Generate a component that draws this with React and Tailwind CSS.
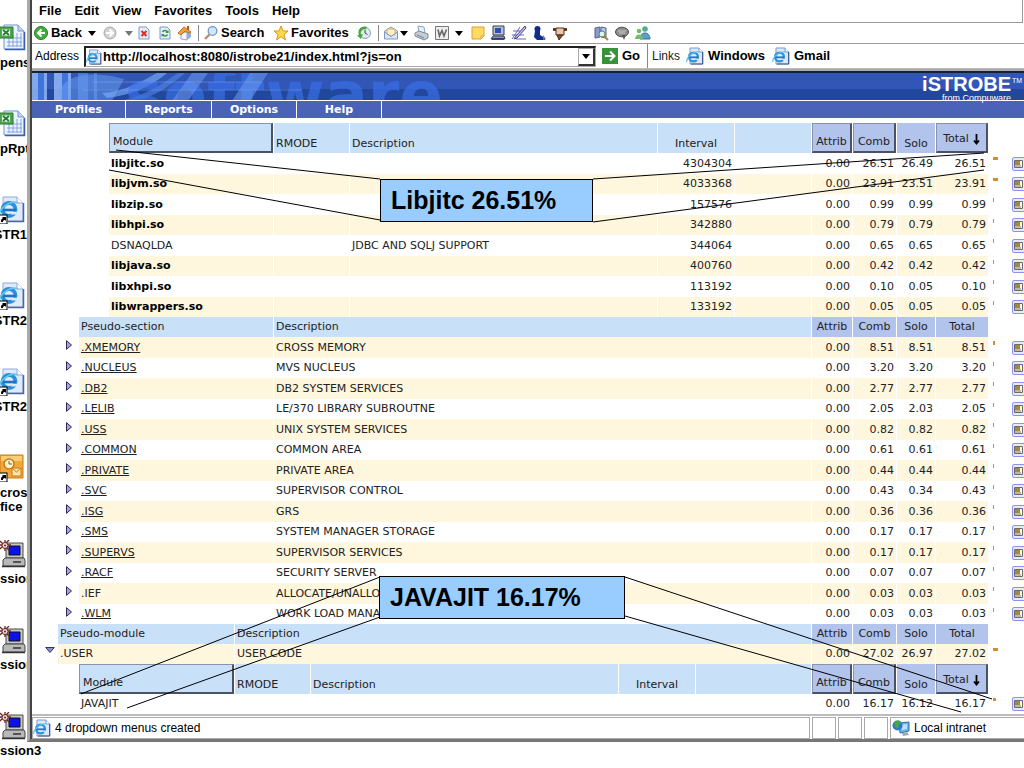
import React, { useState } from "react";

const MODULES = [
  { name: "libjitc.so", interval: "4304304", values: ["0.00", "26.51", "26.49", "26.51"] },
  { name: "libjvm.so", interval: "4033368", values: ["0.00", "23.91", "23.51", "23.91"] },
  { name: "libzip.so", interval: "157576", values: ["0.00", "0.99", "0.99", "0.99"] },
  { name: "libhpi.so", interval: "342880", values: ["0.00", "0.79", "0.79", "0.79"] },
  { name: "DSNAQLDA", plain: true, description: "JDBC AND SQLJ SUPPORT", interval: "344064", values: ["0.00", "0.65", "0.65", "0.65"] },
  { name: "libjava.so", interval: "400760", values: ["0.00", "0.42", "0.42", "0.42"] },
  { name: "libxhpi.so", interval: "113192", values: ["0.00", "0.10", "0.05", "0.10"] },
  { name: "libwrappers.so", interval: "133192", values: ["0.00", "0.05", "0.05", "0.05"] }
];

const SECTIONS = [
  { name: ".XMEMORY", description: "CROSS MEMORY", values: ["0.00", "8.51", "8.51", "8.51"] },
  { name: ".NUCLEUS", description: "MVS NUCLEUS", values: ["0.00", "3.20", "3.20", "3.20"] },
  { name: ".DB2", description: "DB2 SYSTEM SERVICES", values: ["0.00", "2.77", "2.77", "2.77"] },
  { name: ".LELIB", description: "LE/370 LIBRARY SUBROUTNE", values: ["0.00", "2.05", "2.03", "2.05"] },
  { name: ".USS", description: "UNIX SYSTEM SERVICES", values: ["0.00", "0.82", "0.82", "0.82"] },
  { name: ".COMMON", description: "COMMON AREA", values: ["0.00", "0.61", "0.61", "0.61"] },
  { name: ".PRIVATE", description: "PRIVATE AREA", values: ["0.00", "0.44", "0.44", "0.44"] },
  { name: ".SVC", description: "SUPERVISOR CONTROL", values: ["0.00", "0.43", "0.34", "0.43"] },
  { name: ".ISG", description: "GRS", values: ["0.00", "0.36", "0.36", "0.36"] },
  { name: ".SMS", description: "SYSTEM MANAGER STORAGE", values: ["0.00", "0.17", "0.17", "0.17"] },
  { name: ".SUPERVS", description: "SUPERVISOR SERVICES", values: ["0.00", "0.17", "0.17", "0.17"] },
  { name: ".RACF", description: "SECURITY SERVER", values: ["0.00", "0.07", "0.07", "0.07"] },
  { name: ".IEF", noLink: true, description: "ALLOCATE/UNALLOCATE", values: ["0.00", "0.03", "0.03", "0.03"] },
  { name: ".WLM", description: "WORK LOAD MANAGER", values: ["0.00", "0.03", "0.03", "0.03"] }
];

const USER_MODULE = { name: ".USER", description: "USER CODE", values: ["0.00", "27.02", "26.97", "27.02"] };
const USER_CHILDREN = [
  { name: "JAVAJIT", plain: true, interval: "", values: ["0.00", "16.17", "16.12", "16.17"] }
];

const DESKTOP = [
  { icon: "excel", lines: ["pens"] },
  { icon: "excel", lines: ["pRpt"] },
  { icon: "web", lines: ["STR1"], end: true },
  { icon: "web", lines: ["STR2"], end: true },
  { icon: "web", lines: ["STR2"], end: true },
  { icon: "outlook", lines: ["crosoft", "fice"] },
  { icon: "session", lines: ["ssion"] },
  { icon: "session", lines: ["ssion"] },
  { icon: "session", lines: ["ssion3"], last: true }
];

/* ---------- icons ---------- */

function PageE({ className }) {
  return (
    <svg viewBox="0 0 18 18" className={className} aria-hidden="true">
      <path d="M4 1h9l4 4v12H4z" fill="#dce8fb" stroke="#7d99cf" />
      <path d="M13 1v4h4" fill="#fff" stroke="#7d99cf" />
      <path d="M16.500 5v12H5" fill="none" stroke="#43598f" />
      <circle cx="7.500" cy="10" r="4.400" fill="none" stroke="#2f93d8" strokeWidth="2.400" />
      <path d="M3 10.300h9" stroke="#1f78c8" strokeWidth="1.800" />
      <path d="M9 11.700h5l-2.200 2z" fill="#dce8fb" />
      <path d="M1 15C-.5 11 8 3.500 13 5" fill="none" stroke="#5cc0ee" strokeWidth="1.200" />
    </svg>
  );
}

function ShortcutArrow() {
  return (
    <>
      <rect x="-2" y="19" width="9" height="9" fill="#fff" stroke="#000" />
      <path d="M1 26c0-2 0-3 2-4l-1-1h4v4l-1-1c-2 0-2 1-2 2z" fill="#000" />
    </>
  );
}

function DesktopIcon({ type }) {
  if (type === "excel") {
    return (
      <svg viewBox="0 0 27 28" className="h-7 w-[27px]" aria-hidden="true">
        <path d="M4 1h14l6 6v18H4z" fill="#eef4ff" stroke="#6f93d6" />
        <path d="M24.500 8v17.500H5" fill="none" stroke="#3e5fa8" strokeWidth="1.500" />
        <path d="M18 1v6h6" fill="#c5d6f5" stroke="#6f93d6" />
        <path d="M7 14h15M7 18h15M7 22h15M9 13v10M13 11v12M17 9v14M21 9v14" stroke="#86a5e0" />
        <path d="M-1 3h14v11H-1z" fill="#4ea64c" stroke="#2b7a30" />
        <path d="M2 5.500h8v6H2z" fill="#fff" />
        <path d="M3 6l6 5M9 6l-6 5" stroke="#1f7a2d" strokeWidth="1.800" />
      </svg>
    );
  }
  if (type === "web") {
    return (
      <svg viewBox="0 0 27 28" className="h-7 w-[27px]" aria-hidden="true">
        <path d="M3 1h14l6 6v18H3z" fill="#dfeafc" stroke="#8ea9d8" />
        <path d="M23.500 7v18.500H8" fill="none" stroke="#4c659b" strokeWidth="1.500" />
        <path d="M17 1v6h6" fill="#fff" stroke="#8ea9d8" />
        <circle cx="9" cy="13.500" r="6.500" fill="none" stroke="#2b8fdc" strokeWidth="3.800" />
        <path d="M3 14h13" stroke="#1d74c4" strokeWidth="2.600" />
        <path d="M12 15.800h6l-2 2.700h-5z" fill="#dfeafc" />
        <path d="M0 19C-2 14 10 3 18 7" fill="none" stroke="#65c5f0" strokeWidth="1.800" />
        <ShortcutArrow />
      </svg>
    );
  }
  if (type === "outlook") {
    return (
      <svg viewBox="0 0 27 28" className="h-7 w-[27px]" aria-hidden="true">
        <path d="M0 1h23v23H0z" fill="#f2a93a" stroke="#c97a17" />
        <path d="M1 2h21v5H1z" fill="#f9cd78" />
        <path d="M12 14h9v8h-9z" fill="#fde3ab" stroke="#c97a17" />
        <path d="M12 14l4.500 4 4.500-4" fill="none" stroke="#c97a17" />
        <circle cx="9" cy="10" r="5" fill="#fff3d6" stroke="#c97a17" strokeWidth="1.600" />
        <path d="M9 7v3h3" fill="none" stroke="#8b5512" />
        <ShortcutArrow />
      </svg>
    );
  }
  return (
    <svg viewBox="0 0 27 28" className="h-7 w-[27px]" aria-hidden="true">
      <path d="M6 3h17v15H6z" fill="#c8c8c8" stroke="#4a4a4a" />
      <path d="M9 6h11v9H9z" fill="#0a13e8" stroke="#111" />
      <path d="M5 18h19l1 2v6H3v-6z" fill="#b9b9b9" stroke="#444" />
      <path d="M13 22h8" stroke="#333" strokeWidth="1.500" />
      <path d="M2 26.500h23" stroke="#333" strokeWidth="1.500" />
      <path d="M0 1l10 10M9 0L0 9M5 0v11M0 5h11" stroke="#6b2420" strokeWidth="1.300" />
      <circle cx="5" cy="5.500" r="3" fill="#f1dada" stroke="#6b2420" />
      <circle cx="5" cy="5.500" r="1" fill="#6b2420" />
    </svg>
  );
}

function ToolIcon({ type }) {
  const shapes = {
    back: (
      <>
        <circle cx="8" cy="8" r="6.500" fill="#3fae3a" stroke="#237a25" />
        <path d="M8.500 4.500L5 8l3.500 3.500M5 8h7" fill="none" stroke="#fff" strokeWidth="2" />
      </>
    ),
    forward: (
      <>
        <circle cx="8" cy="8" r="6" fill="#d2d2d2" stroke="#aaa" />
        <path d="M7.500 4.500L11 8l-3.500 3.500M11 8H4" fill="none" stroke="#fff" strokeWidth="2" />
      </>
    ),
    stop: (
      <>
        <path d="M3 2h7l3 3v9H3z" fill="#e4edfb" stroke="#7d99cf" />
        <path d="M5.500 6l5 5M10.500 6l-5 5" stroke="#e02a22" strokeWidth="2" />
      </>
    ),
    refresh: (
      <>
        <path d="M3 2h7l3 3v9H3z" fill="#e4edfb" stroke="#7d99cf" />
        <path d="M5.500 7c1-2 4-2 5 0M10.500 9.500c-1 2-4 2-5 0" fill="none" stroke="#2e9a38" strokeWidth="1.600" />
        <path d="M11.500 5v3h-3zM4.500 12V9h3z" fill="#2e9a38" />
      </>
    ),
    home: (
      <>
        <path d="M4 8v6l6 1V7z" fill="#f5f5f8" stroke="#a0a9c0" />
        <path d="M10 7v8l4-3V8z" fill="#8fb0e6" />
        <path d="M1 8l6-6 7 5-2 1-4-2-4 4z" fill="#f1a33c" stroke="#c16d1b" />
        <path d="M10 1h2v4h-2z" fill="#c35428" />
      </>
    ),
    search: (
      <>
        <path d="M6.500 9.500L2 14" stroke="#c98a63" strokeWidth="2.400" />
        <circle cx="9.500" cy="6" r="4.300" fill="#cfe6fb" stroke="#7396c8" strokeWidth="1.300" />
      </>
    ),
    star: <path d="M8 1l2 5h5l-4 3.500L12.500 15 8 11.700 3.500 15 5 9.500 1 6h5z" fill="#ffd94a" stroke="#d6981d" />,
    history: (
      <>
        <circle cx="9" cy="8" r="5.500" fill="#dfeaf2" stroke="#8aa1b5" />
        <path d="M9 4.500V8l2.500 1.500" fill="none" stroke="#444" />
        <path d="M11 2C5 0 1 5 3 10l-2 .5L5 14l2-5-2 .5C4 6 7 3.500 10 4z" fill="#43a83f" />
      </>
    ),
    mail: (
      <>
        <path d="M1.500 6L8 2l6.500 4v8h-13z" fill="#d9e6fa" stroke="#7d99c4" />
        <path d="M4 4h8v5l-4 2.500L4 9z" fill="#fff0c2" stroke="#d5b05e" />
        <path d="M1.500 7L8 11.500 14.500 7" fill="none" stroke="#7d99c4" />
      </>
    ),
    print: (
      <>
        <path d="M4 1l6 1 1 6H5z" fill="#e6f2fc" stroke="#83a5c5" />
        <path d="M1 8l4-2 9 3v4l-4 2-9-4z" fill="#c5cbd2" stroke="#7f8b96" />
        <path d="M3 10l7 3" stroke="#5d87b3" />
      </>
    ),
    word: (
      <>
        <path d="M1.500 1.500h13v13h-13z" fill="#eee" stroke="#777" />
        <path d="M4 4.500L5.500 11 8 5.500 10 11l2.500-6.500" fill="none" stroke="#666" strokeWidth="1.600" />
      </>
    ),
    note: (
      <>
        <path d="M2 2h12v9l-3 3H2z" fill="#ffda64" stroke="#d9a52a" />
        <path d="M14 11h-3v3z" fill="#fff3c5" stroke="#d9a52a" />
      </>
    ),
    computer: (
      <>
        <path d="M3 1h11v9H3z" fill="#b9bfd0" stroke="#39405c" />
        <path d="M5 3h6v5H5z" fill="#2c50ae" />
        <path d="M3 11h11l1 3H1z" fill="#8f97ad" stroke="#39405c" />
        <path d="M2 14h12" stroke="#1f2b63" strokeWidth="1.500" />
      </>
    ),
    pencil: (
      <>
        <path d="M1 14L9 2M4 14L13 2M2 6h7M1 10h12M5 14h10" stroke="#6a66b2" />
        <path d="M14 1L5 11l-2 3 3-1L15 3z" fill="#c4c4ee" stroke="#44418e" />
      </>
    ),
    person: (
      <>
        <circle cx="6.500" cy="4" r="3" fill="#122c8c" />
        <path d="M4 6h5v4l5 3v2H6l-3-3z" fill="#122c8c" />
        <path d="M12 10l3 4-3 1z" fill="#6976a8" />
      </>
    ),
    hammer: (
      <>
        <path d="M1 3h14v3H1z" fill="#6a3a20" />
        <path d="M4 3h8v7H4z" fill="#e6c9ab" stroke="#52301c" />
        <path d="M5 10h6l-4 5z" fill="#8a4b25" stroke="#52301c" />
      </>
    ),
    book: (
      <>
        <path d="M2 3l5-1v10l-5 1z" fill="#8a9ad0" stroke="#535f95" />
        <path d="M8 2l5 1v10l-5-1z" fill="#bcc6ea" stroke="#535f95" />
        <circle cx="9" cy="9" r="3" fill="#e3f2e8" stroke="#4b8f68" />
        <path d="M11 11l4 4" stroke="#b87f40" strokeWidth="2" />
      </>
    ),
    chat: (
      <>
        <ellipse cx="8" cy="7" rx="6.500" ry="4.800" fill="#8e8e8e" stroke="#4d4d4d" />
        <path d="M8 10h4l-2 5z" fill="#555" />
        <path d="M4 6h8M5 8h6" stroke="#c9c9c9" />
      </>
    ),
    people: (
      <>
        <circle cx="10" cy="4" r="2.800" fill="#54a9a0" />
        <path d="M5 14c0-8 10-8 10 0z" fill="#5aa0cb" stroke="#337598" />
        <circle cx="4" cy="6" r="2.300" fill="#74bd65" />
        <path d="M0 14c0-6 8-6 8 0z" fill="#79b96e" />
      </>
    )
  };
  return (
    <svg viewBox="0 0 16 16" className="h-4 w-4 shrink-0" aria-hidden="true">
      {shapes[type]}
    </svg>
  );
}

function Caret({ className }) {
  return (
    <svg viewBox="0 0 8 5" className={`h-[5px] w-2 shrink-0 ${className}`} aria-hidden="true">
      <path d="M0 0h8L4 5z" fill="currentColor" />
    </svg>
  );
}

function Divider() {
  return <div className="h-4 w-px shrink-0 bg-[#888]" />;
}

/* ---------- browser chrome ---------- */

function ToolButton({ icon, title, wide }) {
  return (
    <button type="button" title={title} aria-label={title} className={`flex shrink-0 items-center justify-center ${wide ? "w-[21px]" : "w-5"}`}>
      <ToolIcon type={icon} />
    </button>
  );
}

function Toolbar() {
  return (
    <div className="flex h-[21px] items-center border-b border-[#999] text-[13px] font-bold">
      <button type="button" className="flex w-[70px] shrink-0 items-center gap-[2px] pl-px">
        <ToolIcon type="back" />
        Back
        <Caret className="ml-1 text-black" />
      </button>
      <button type="button" aria-label="Forward" className="flex w-[31px] shrink-0 items-center justify-between">
        <ToolIcon type="forward" />
        <Caret className="text-[#777]" />
      </button>
      <ToolButton icon="stop" title="Stop" wide />
      <ToolButton icon="refresh" title="Refresh" wide />
      <ToolButton icon="home" title="Home" />
      <div className="w-[3px]" />
      <Divider />
      <button type="button" className="ml-1 flex w-[70px] shrink-0 items-center gap-[2px]">
        <ToolIcon type="search" />
        Search
      </button>
      <button type="button" className="flex w-[81px] shrink-0 items-center gap-[2px]">
        <ToolIcon type="star" />
        Favorites
      </button>
      <ToolButton icon="history" title="History" />
      <div className="w-1" />
      <Divider />
      <button type="button" aria-label="Mail" className="ml-1 flex w-7 shrink-0 items-center">
        <ToolIcon type="mail" />
        <Caret className="ml-px" />
      </button>
      <ToolButton icon="print" title="Print" wide />
      <button type="button" aria-label="Edit" className="flex w-[31px] shrink-0 items-center justify-between pl-[2px]">
        <ToolIcon type="word" />
        <Caret className="text-black" />
      </button>
      <div className="w-1" />
      <ToolButton icon="note" title="Note" wide />
      <ToolButton icon="computer" title="Computer" />
      <ToolButton icon="pencil" title="Draw" wide />
      <ToolButton icon="person" title="Person" />
      <ToolButton icon="hammer" title="Tools" wide />
      <div className="w-5" />
      <ToolButton icon="book" title="Research" wide />
      <ToolButton icon="chat" title="Discuss" wide />
      <ToolButton icon="people" title="Messenger" wide />
    </div>
  );
}

function AddressBar() {
  const [url, setUrl] = useState("http://localhost:8080/istrobe21/index.html?js=on");
  return (
    <div className="flex h-[25px] items-center border-b border-[#bbb] text-[13px]">
      <label htmlFor="address" className="w-[52px] shrink-0 pl-[3px] text-[12px]">Address</label>
      <div className="flex h-[21px] min-w-0 flex-1 items-center border-2 border-r border-b border-[#222] border-r-[#aaa] border-b-[#aaa] bg-white">
        <PageE className="h-4 w-4 shrink-0" />
        <input
          id="address"
          type="text"
          value={url}
          onChange={e => setUrl(e.target.value)}
          className="h-4 min-w-0 flex-1 bg-transparent pl-px font-bold outline-none"
        />
        <button type="button" aria-label="Show addresses" className="flex h-[18px] w-[17px] items-center justify-center border border-r-2 border-b-2 border-[#aaa] border-r-[#333] border-b-[#333]">
          <Caret className="text-black" />
        </button>
      </div>
      <div className="flex w-[428px] shrink-0 items-center">
        <button type="button" className="flex w-[51px] items-center gap-1 pl-[6px] font-bold">
          <svg viewBox="0 0 16 16" className="h-4 w-4" aria-hidden="true">
            <path d="M0 0h16v16H0z" fill="#37933a" />
            <path d="M3 8h9M8 3.500L12.500 8 8 12.500" fill="none" stroke="#fff" strokeWidth="2" />
          </svg>
          Go
        </button>
        <div className="h-6 w-px bg-[#888]" />
        <span className="w-[38px] pl-1 text-[12px] text-[#222]">Links</span>
        <a href="#windows" className="flex w-[86px] items-center gap-1 font-bold">
          <PageE className="h-[18px] w-[18px]" />
          Windows
        </a>
        <a href="#gmail" className="flex items-center gap-1 font-bold">
          <PageE className="h-[18px] w-[18px]" />
          Gmail
        </a>
      </div>
    </div>
  );
}

function Banner() {
  return (
    <div className="relative z-10 flex h-[29px] justify-end border-t-2 border-[#16203f] bg-gradient-to-b from-[#3156b5] from-60% to-[#21489c] to-60%">
      <svg className="absolute inset-0 h-full w-[440px] overflow-hidden" aria-hidden="true">
        <path d="M0 0h6v28H0zM12 0h3v28h-3zM22 0h8v28h-8zM36 0h3v28h-3z" fill="#9fc4ff" opacity=".75" />
        <path d="M6 0h6v28H6zM30 0h6v28h-6z" fill="#3f74dd" />
        <path d="M46 0h10v28H46zM62 0h3v28h-3z" fill="#5f92f0" opacity=".6" />
        <path d="M30 28C20 8 50-6 92 6L80 28z" fill="#6ca0f4" opacity=".5" />
        <path d="M70 20C95 18 110 8 125 0h10c-14 12-34 22-60 25z" fill="#7fb0ff" opacity=".6" />
        <path d="M86 28c26-4 42-16 60-28h7c-16 14-32 24-50 28z" fill="#5285e6" opacity=".6" />
        <text x="93" y="44" fontSize="64" fontWeight="bold" fontFamily="DejaVu Sans, sans-serif" fill="#3a70ea" opacity=".65">software</text>
        <path d="M140 28L160 0h16l-20 28zM200 28L218 0h18l-18 28z" fill="#6b9af2" opacity=".55" />
        <path d="M60 9h170M50 17h220" stroke="#85aef7" opacity=".45" />
      </svg>
      <div className="relative flex flex-col items-end pr-[13px] font-['Liberation_Sans',sans-serif] text-white">
        <div className="text-[20px] leading-[22px] font-bold">iSTROBE</div>
        <div className="text-[9px] leading-[6px]">from Compuware</div>
        <span className="absolute top-1 right-[2px] text-[7px] leading-[8px]">TM</span>
      </div>
    </div>
  );
}

function SiteNav() {
  return (
    <nav className="flex h-[18px] border-t border-white bg-[#4a63b9] font-['DejaVu_Sans',sans-serif] text-[11px] leading-[17px] font-bold text-white">
      <a href="#profiles" className="w-[94px] border-r border-white text-center">Profiles</a>
      <a href="#reports" className="w-[86px] border-r border-white text-center">Reports</a>
      <a href="#options" className="w-[85px] border-r border-white text-center">Options</a>
      <a href="#help" className="w-[85px] border-r border-white text-center">Help</a>
    </nav>
  );
}

/* ---------- report tables ---------- */

function NumberCols() {
  return (
    <>
      <col className="w-[41px]" />
      <col className="w-[44px]" />
      <col className="w-[39px]" />
      <col className="w-[53px]" />
      <col className="w-[23px]" />
      <col className="w-3" />
    </>
  );
}

function RaisedHead({ children, tone, align = "justify-start" }) {
  return (
    <th className={`h-[30px] border-r border-white p-0 font-normal ${tone}`}>
      <button type="button" className={`flex h-[30px] w-full items-end border-t border-r-2 border-b-2 border-l border-[#8b93a8] border-r-[#4b5264] border-b-[#4b5264] ${align}`}>
        {children}
      </button>
    </th>
  );
}

function SortedNumberHeads() {
  return (
    <>
      <RaisedHead tone="bg-[#b2c3ec]" align="justify-center">Attrib</RaisedHead>
      <RaisedHead tone="bg-[#b2c3ec]" align="justify-center">Comb</RaisedHead>
      <th className="border-r border-white bg-[#b2c3ec] p-0 text-center align-bottom font-normal">Solo</th>
      <RaisedHead tone="bg-[#b2c3ec]" align="justify-center">
        <span className="mb-[3px] flex items-center gap-1">
          Total
          <svg viewBox="0 0 7 11" className="h-[11px] w-[7px]" aria-hidden="true">
            <path d="M3.500 0v9M1 6.500L3.500 9.500 6 6.500" fill="none" stroke="#000" strokeWidth="1.800" />
          </svg>
        </span>
      </RaisedHead>
      <td />
      <td />
    </>
  );
}

function PlainNumberHeads() {
  return (
    <>
      {["Attrib", "Comb", "Solo", "Total"].map(h => (
        <th key={h} className="border-r border-white bg-[#b2c3ec] p-0 text-center font-normal">{h}</th>
      ))}
      <td />
      <td />
    </>
  );
}

function Numbers({ values, tone, noReport }) {
  const total = Number(values[3]);
  return (
    <>
      {values.map((v, i) => (
        <td key={i} className={`border-r border-white p-0 pr-[2px] text-right ${tone}`}>{v}</td>
      ))}
      <td className="p-0 pl-1 align-top">
        <div
          className={`mt-1 bg-[#d58d2c] ${total > 10 ? "h-[3px]" : "h-1"}`}
          style={{ width: Math.max(1, Math.round(total / 5)) }}
        />
      </td>
      <td className="overflow-hidden p-0">
        {!noReport && (
          <button type="button" aria-label="Open report" className="block">
            <svg viewBox="0 0 16 14" className="h-[14px] w-4" aria-hidden="true">
              <rect x=".5" y=".5" width="15" height="13" rx="1.500" fill="#e7e9fd" stroke="#8d91ee" />
              <path d="M2.500 3.500h8v7h-8z" fill="#fffbe8" stroke="#6a6a6a" />
              <path d="M3 4h5v4H3z" fill="#a38844" />
              <path d="M3 9h6" stroke="#777" />
            </svg>
          </button>
        )}
      </td>
    </>
  );
}

function ModuleTable({ rows, className, cols }) {
  return (
    <div className={className}>
      <table className="w-full table-fixed border-separate border-spacing-0">
        <colgroup>
          <col className={cols[0]} />
          <col className={cols[1]} />
          <col />
          <col className="w-[77px]" />
          <col className={cols[2]} />
          <NumberCols />
        </colgroup>
        <thead>
          <tr className="h-[30px] text-left">
            <RaisedHead tone="bg-[#c9e0f9]"><span className="pl-[3px]">Module</span></RaisedHead>
            <th className="border-r border-white bg-[#c9e0f9] p-0 pl-[2px] align-bottom font-normal">RMODE</th>
            <th className="border-r border-white bg-[#c9e0f9] p-0 pl-[2px] align-bottom font-normal">Description</th>
            <th className="border-r border-white bg-[#c9e0f9] p-0 text-center align-bottom font-normal">Interval</th>
            <td className="border-r border-white bg-[#c9e0f9]" />
            <SortedNumberHeads />
          </tr>
        </thead>
        <tbody>
          {rows.map((r, i) => {
            const tone = i % 2 ? "bg-[#fff6de]" : "";
            return (
              <tr key={r.name} className={i % 2 || rows.length === 1 ? "h-5" : "h-[21px]"}>
                <td className={`border-r border-white p-0 pl-[2px] ${r.plain ? "" : "font-bold text-black"} ${tone}`}>{r.name}</td>
                <td className={`border-r border-white p-0 ${tone}`} />
                <td className={`border-r border-white p-0 pl-[2px] ${tone}`}>{r.description}</td>
                <td className={`border-r border-white p-0 pr-[2px] text-right ${tone}`}>{r.interval}</td>
                <td className={`border-r border-white p-0 ${tone}`} />
                <Numbers values={r.values} tone={tone} />
              </tr>
            );
          })}
        </tbody>
      </table>
    </div>
  );
}

function SectionTable({ title, rows, className, cols, open }) {
  return (
    <div className={className}>
      <table className="w-full table-fixed border-separate border-spacing-0">
        <colgroup>
          <col className="w-[18px]" />
          <col className={cols} />
          <col />
          <NumberCols />
        </colgroup>
        <thead>
          <tr className="h-5 text-left">
            <td />
            <th className="border-r border-white bg-[#c9e0f9] p-0 pl-[2px] font-normal">{title}</th>
            <th className="border-r border-white bg-[#c9e0f9] p-0 pl-[2px] font-normal">Description</th>
            <PlainNumberHeads />
          </tr>
        </thead>
        <tbody>
          {rows.map((r, i) => {
            const tone = i % 2 ? "" : "bg-[#fff6de]";
            return (
              <tr key={r.name} className={i % 2 || open ? "h-5" : "h-[21px]"}>
                <td className="p-0 pl-[5px] align-top">
                  <button type="button" aria-label={`Toggle ${r.name}`} className="mt-[3px] block">
                    {open ? (
                      <svg viewBox="0 0 10 6" className="h-[6px] w-[10px]" aria-hidden="true">
                        <path d="M.7.5h8.600L5 5.500z" fill="#8f8fc4" stroke="#333368" />
                      </svg>
                    ) : (
                      <svg viewBox="0 0 6 10" className="h-[10px] w-[6px]" aria-hidden="true">
                        <path d="M.5.7v8.600L5.500 5z" fill="#a6a6d2" stroke="#29295e" />
                      </svg>
                    )}
                  </button>
                </td>
                <td className={`border-r border-white p-0 pl-[2px] ${tone}`}>
                  {open || r.noLink ? r.name : <a href="#section" className="underline">{r.name}</a>}
                </td>
                <td className={`border-r border-white p-0 pl-[2px] ${tone}`}>{r.description}</td>
                <Numbers values={r.values} tone={tone} noReport={open} />
              </tr>
            );
          })}
        </tbody>
      </table>
    </div>
  );
}

function StatusBar() {
  return (
    <footer className="flex h-[25px] gap-[2px] border-t-2 border-[#bbb] pt-px text-[12px]">
      <div className="flex flex-1 items-center gap-1 border border-[#aaa]">
        <PageE className="h-[18px] w-[18px]" />
        4 dropdown menus created
      </div>
      <div className="w-6 border border-[#aaa]" />
      <div className="w-6 border border-[#aaa]" />
      <div className="w-6 border border-[#aaa]" />
      <div className="flex w-[134px] items-center gap-1 border border-r-0 border-[#aaa] pl-px">
        <svg viewBox="0 0 18 18" className="h-[18px] w-[18px]" aria-hidden="true">
          <path d="M7 4l10-1v9L8 14z" fill="#6ab6ee" stroke="#2f6da8" />
          <path d="M9 6l6-1v5l-5 1z" fill="#b9e2fb" />
          <path d="M10 14l5-1 2 3-6 1z" fill="#9aaabb" />
          <circle cx="5.500" cy="6.500" r="5" fill="#2f77cf" />
          <path d="M2 4c2-3 5-3 7-1L7 6l-1 4-3-2z" fill="#43a84a" />
        </svg>
        Local intranet
      </div>
    </footer>
  );
}

function Callout({ className, children }) {
  return (
    <div className={`absolute flex h-[43px] items-center border border-black bg-[#99ccff] pl-[10px] font-['Liberation_Sans',sans-serif] text-[25px] leading-none font-bold text-black ${className}`}>
      {children}
    </div>
  );
}

export default function App() {
  return (
    <div className="relative flex min-h-screen overflow-hidden bg-white font-['Liberation_Sans',sans-serif] text-black">
      <aside className="w-[27px] shrink-0 pt-6">
        {DESKTOP.map((d, i) => (
          <div key={i} className={d.last ? "" : "h-[86px]"}>
            <DesktopIcon type={d.icon} />
            <div className={`mt-1 flex flex-col text-[13px] leading-[14px] font-bold ${d.end ? "items-end" : "items-start"}`}>
              {d.lines.map(line => (
                <span key={line}>{line}</span>
              ))}
            </div>
          </div>
        ))}
      </aside>

      <div className="relative min-w-0 flex-1 self-start border-b-[3px] border-l-[3px] border-[#777] border-l-[#aaa] bg-white">
        <div className="border-l-2 border-[#444]">
          <nav className="mr-px flex h-[23px] items-center gap-[13px] border-r border-b border-[#999] pl-[7px] text-[13px] font-bold">
            {["File", "Edit", "View", "Favorites", "Tools", "Help"].map(m => (
              <button key={m} type="button">{m}</button>
            ))}
          </nav>
          <Toolbar />
          <AddressBar />
          <div className="h-[2px] bg-[#aaa]" />
          <Banner />
          <SiteNav />

          <main className="overflow-hidden pt-[5px] font-['DejaVu_Sans',sans-serif] text-[11px] leading-[18px] text-[#222]">
            <ModuleTable rows={MODULES} className="pl-[77px]" cols={["w-[165px]", "w-[76px]", "w-[77px]"]} />
            <SectionTable title="Pseudo-section" rows={SECTIONS} className="pl-[29px]" cols="w-[195px]" />
            <SectionTable title="Pseudo-module" rows={[USER_MODULE]} className="pl-2" cols="w-[177px]" open />
            <ModuleTable rows={USER_CHILDREN} className="pl-[47px]" cols={["w-[156px]", "w-[76px]", "w-[116px]"]} />
          </main>
          <StatusBar />
        </div>
      </div>

      {/* callout leader lines */}
      <svg className="pointer-events-none absolute inset-0 h-full w-full" aria-hidden="true">
        <path
          d="M116 150L380 179M109 170L380 220M593 179L984 153M593 222L984 170M380 577L81 694M380 617L127 708M625 577L992 699M625 616L961 712"
          fill="none"
          stroke="#000"
          strokeWidth="1"
        />
      </svg>
      <Callout className="top-[179px] left-[380px] w-[213px]">Libjitc 26.51%</Callout>
      <Callout className="top-[576px] left-[379px] w-[246px]">JAVAJIT 16.17%</Callout>
    </div>
  );
}
